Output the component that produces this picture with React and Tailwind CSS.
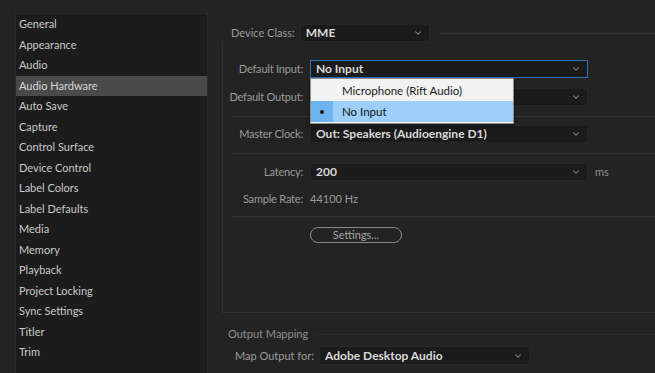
import React from 'react';
import { ChevronDown } from 'lucide-react';

const categories = [
  'General',
  'Appearance',
  'Audio',
  'Audio Hardware',
  'Auto Save',
  'Capture',
  'Control Surface',
  'Device Control',
  'Label Colors',
  'Label Defaults',
  'Media',
  'Memory',
  'Playback',
  'Project Locking',
  'Sync Settings',
  'Titler',
  'Trim',
];

const Select = ({ value, className = '', focused = false, children }) => (
  <div
    className={`relative h-[18px] flex items-center pl-[5px] pr-[6px] bg-[#1b1b1b] border ${
      focused ? 'border-[#2f6fb5]' : 'border-[#262626]'
    } ${className}`}
  >
    <span className="flex-1 truncate leading-[14px] text-[12px] text-[#d9d9d9] font-bold">{value}</span>
    <ChevronDown className="w-[10px] h-[10px] text-[#8a8a8a]" strokeWidth={2.5} />
    {children}
  </div>
);

const Row = ({ label, children, className = '' }) => (
  <div className={`flex items-center h-[18px] ${className}`}>
    <span className="w-[81px] pr-[1px] text-right text-[#9b9b9b] whitespace-nowrap tracking-[-0.2px]">{label}</span>
    <div className="ml-[6px] flex items-center">{children}</div>
  </div>
);

const InputMenu = () => (
  <div className="absolute left-[-1px] top-[17px] w-[204px] bg-[#f2f2f2] border border-[#8d8d8d] py-[1px] z-10 shadow-[0_2px_4px_rgba(0,0,0,0.4)]">
    <div className="h-[21px] flex items-center pl-[31px] text-[#1a1a1a] text-[11.5px]">Microphone (Rift Audio)</div>
    <div className="h-[21px] flex items-center bg-[#9dcff8] text-[#111] text-[11.5px]">
      <div className="w-[22px] h-full bg-[#6db3ee] flex items-center justify-center">
        <span className="w-[4px] h-[4px] rounded-full bg-[#1a1a1a]" />
      </div>
      <span className="pl-[9px]">No Input</span>
    </div>
  </div>
);

export default function App() {
  return (
    <div
      className="w-[655px] h-[373px] overflow-hidden bg-[#232323] flex pt-[13px] pl-[15px] text-[11px] leading-[14px]"
      style={{ fontFamily: 'Lato, "Noto Sans", sans-serif' }}
    >
      <div className="w-[193px] shrink-0 bg-[#1c1c1c] border border-[#2b2b2b] border-b-0">
        {categories.map((c) => (
          <div
            key={c}
            className={`h-[20.5px] flex items-center pl-[3px] ${
              c === 'Audio Hardware' ? 'bg-[#4a4a4a] text-[#d6d6d6]' : 'text-[#c9c9c9]'
            }`}
          >
            {c}
          </div>
        ))}
      </div>

      <div className="flex-1 min-w-0 overflow-hidden pl-[14px]">
        <div className="w-[460px]">
          <div className="mt-[11px] flex items-center h-[18px] pl-[9px]">
            <span className="text-[#9b9b9b] whitespace-nowrap">Device Class:</span>
            <Select value="MME" className="ml-[5px] w-[130px]" />
            <div className="flex-1 ml-[8px] border-t border-[#303030]" />
          </div>

          <div className="h-[271px] border-x border-b border-[#303030] pt-[18px] flex flex-col">
            <Row label="Default Input:">
              <Select value="No Input" focused className="w-[278px]">
                <InputMenu />
              </Select>
            </Row>
            <Row label="Default Output:" className="mt-[10px]">
              <Select value="" className="w-[278px]" />
            </Row>
            <div className="mt-[10px] ml-[8px] border-t border-[#2f2f2f]" />
            <Row label="Master Clock:" className="mt-[8px]">
              <Select value="Out: Speakers (Audioengine D1)" className="w-[278px]" />
            </Row>
            <div className="mt-[10px] ml-[8px] border-t border-[#2f2f2f]" />
            <Row label="Latency:" className="mt-[9px]">
              <Select value="200" className="w-[278px]" />
              <span className="ml-[7px] text-[#8f8f8f]">ms</span>
            </Row>
            <Row label="Sample Rate:" className="mt-[9px]">
              <span className="text-[#9b9b9b]">44100 Hz</span>
            </Row>
            <div className="mt-[8px] ml-[8px] border-t border-[#2f2f2f]" />
            <div className="mt-[10px] ml-[87px] w-[92px] h-[16px] rounded-full border border-[#8a8a8a] flex items-center justify-center text-[#a5a5a5]">
              Settings...
            </div>
          </div>

          <div className="mt-[14px] flex items-center h-[14px] pl-[6px]">
            <span className="text-[#8e8e8e] whitespace-nowrap">Output Mapping</span>
            <div className="flex-1 ml-[8px] border-t border-[#2c2c2c]" />
          </div>
          <div className="mt-[5px] flex items-center h-[19px] pl-[13px]">
            <span className="text-[#9b9b9b] whitespace-nowrap">Map Output for:</span>
            <Select value="Adobe Desktop Audio" className="ml-[5px] w-[211px] h-[19px]" />
          </div>
        </div>
      </div>
    </div>
  );
}
